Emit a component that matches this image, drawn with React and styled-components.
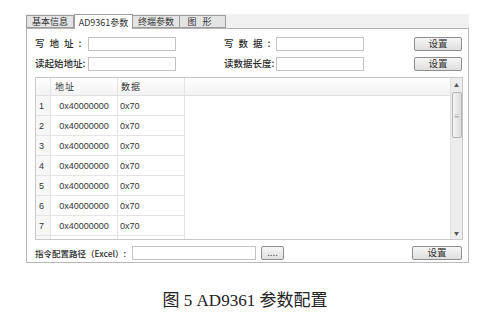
import React from 'react';
import styled, { createGlobalStyle } from 'styled-components';

const uiFont = '"Noto Sans CJK SC", "DejaVu Sans", sans-serif';

const GlobalStyle = createGlobalStyle`
  html, body {
    margin: 0;
    padding: 0;
    background: #ffffff;
  }
  body {
    font-family: ${uiFont};
    color: #222222;
  }
`;

const Page = styled.div`
  width: 489px;
  height: 318px;
  display: flex;
  flex-direction: column;
  overflow: hidden;
`;

const Window = styled.div`
  margin: 13px 0 0 26px;
  width: 443px;
  display: flex;
  flex-direction: column;
`;

const TabStrip = styled.div`
  display: flex;
  align-items: flex-end;
  height: 14px;
  background: #f0f0f0;
  border-bottom: 1px solid #b4b4b4;
  margin-top: 1px;
`;

const Tab = styled.div`
  box-sizing: border-box;
  width: ${p => p.w}px;
  height: ${p => (p.active ? 15 : 13)}px;
  margin-bottom: ${p => (p.active ? -1 : 0)}px;
  display: flex;
  align-items: center;
  justify-content: center;
  font-size: 9px;
  line-height: 1;
  letter-spacing: ${p => p.spacing || 0}px;
  background: ${p => (p.active ? '#ffffff' : '#e4e4e4')};
  border: 1px solid #9c9c9c;
  border-bottom: ${p => (p.active ? 'none' : '1px solid #9c9c9c')};
  border-left: ${p => (p.first || p.active ? '1px solid #9c9c9c' : 'none')};
  color: #333;
`;

const Panel = styled.div`
  box-sizing: border-box;
  height: 234px;
  background: #ffffff;
  border: 1px solid #b8b8b8;
  border-top: none;
  padding: 8px 6px 0 8px;
  display: flex;
  flex-direction: column;
`;

const FormRow = styled.div`
  display: flex;
  align-items: center;
  height: 14px;
  margin-bottom: 6px;
`;

const Label = styled.span`
  width: ${p => (p.w ? `${p.w}px` : 'auto')};
  flex: none;
  margin-left: ${p => p.ml || 0}px;
  font-size: ${p => p.size || 9.5}px;
  line-height: 1.2;
  font-weight: 500;
  letter-spacing: ${p => p.spacing || 0}px;
  white-space: nowrap;
  color: #2a2a2a;
`;

const Input = styled.div`
  box-sizing: border-box;
  flex: none;
  width: ${p => p.w}px;
  height: 14px;
  border: 1px solid #c4c4c4;
  background: #fff;
`;

const Button = styled.div`
  box-sizing: border-box;
  flex: none;
  width: ${p => p.w}px;
  height: 14px;
  margin-left: ${p => (p.ml === undefined ? 'auto' : `${p.ml}px`)};
  border: 1px solid #8e8e8e;
  border-radius: 2px;
  background: linear-gradient(#f6f6f6, #dedede);
  display: flex;
  align-items: center;
  justify-content: center;
  font-size: 9.5px;
  line-height: 1;
  color: #333;
`;

const Table = styled.div`
  box-sizing: border-box;
  position: relative;
  height: 163px;
  width: 428px;
  border: 1px solid #c8c8c8;
  overflow: hidden;
  color: #333;
`;

const Grid = styled.div`
  display: grid;
  grid-template-columns: 15px 67px 67px 1fr;
`;

const HeadCell = styled.div`
  height: 17px;
  display: flex;
  align-items: center;
  padding-left: ${p => p.pad || 0}px;
  background: linear-gradient(#ffffff, #f2f2f2);
  border-bottom: 1px solid #e0e0e0;
  border-right: ${p => (p.last ? 'none' : '1px solid #e4e4e4')};
  font-size: 9px;
  letter-spacing: 1px;
  color: #333;
`;

const Cell = styled.div`
  height: 19px;
  display: flex;
  align-items: center;
  justify-content: ${p => (p.center ? 'center' : 'flex-start')};
  padding-left: ${p => p.pad || 0}px;
  border-bottom: ${p => (p.blank ? 'none' : '1px solid #e4e4e4')};
  border-right: ${p => (p.blank ? 'none' : '1px solid #e4e4e4')};
  background: ${p => (p.num ? '#f7f7f7' : '#fff')};
  font-family: "Liberation Sans", sans-serif;
  font-size: 9px;
  color: #333;
`;

const ScrollBar = styled.div`
  position: absolute;
  top: 0;
  right: 0;
  bottom: 0;
  width: 11px;
  background: #ededed;
  border-left: 1px solid #e0e0e0;
  display: flex;
  flex-direction: column;
  align-items: center;
`;

const Arrow = styled.div`
  height: 13px;
  display: flex;
  align-items: center;
  justify-content: center;
  font-size: 5px;
  color: #555;
`;

const Thumb = styled.div`
  box-sizing: border-box;
  width: 10px;
  height: 46px;
  margin-top: 1px;
  border: 1px solid #b4b4b4;
  border-radius: 2px;
  background: linear-gradient(90deg, #f4f4f4, #dcdcdc);
  display: flex;
  align-items: center;
  justify-content: center;
  font-size: 6px;
  color: #888;
`;

const Spacer = styled.div`
  flex: 1;
`;

const BottomRow = styled.div`
  display: flex;
  align-items: center;
  height: 14px;
  margin-top: 6px;
`;

const PathInput = styled(Input)`
  margin-left: auto;
`;

const PathGroup = styled.div`
  display: flex;
  align-items: center;
  width: 249px;
  flex: none;
`;

const Caption = styled.div`
  margin-top: 23px;
  text-align: center;
  font-family: "Liberation Serif", "Noto Sans CJK SC", serif;
  font-size: 17px;
  color: #222;
  padding-left: 1px;
`;

const rows = [1, 2, 3, 4, 5, 6, 7];

export default function App() {
  return (
    <Page>
      <GlobalStyle />
      <Window>
        <TabStrip>
          <Tab w={48} first>基本信息</Tab>
          <Tab w={59} active>AD9361参数</Tab>
          <Tab w={47}>终端参数</Tab>
          <Tab w={46} spacing={6}>图形</Tab>
        </TabStrip>
        <Panel>
          <FormRow>
            <Label w={53} spacing={5}>写地址:</Label>
            <Input w={88} />
            <Label w={52} ml={48} spacing={5}>写数据:</Label>
            <Input w={88} />
            <Button w={48}>设置</Button>
          </FormRow>
          <FormRow>
            <Label w={53}>读起始地址:</Label>
            <Input w={88} />
            <Label w={52} ml={48}>读数据长度:</Label>
            <Input w={88} />
            <Button w={48}>设置</Button>
          </FormRow>
          <Table>
            <Grid>
              <HeadCell />
              <HeadCell pad={4}>地址</HeadCell>
              <HeadCell pad={3}>数据</HeadCell>
              <HeadCell last />
              {rows.map(n => (
                <React.Fragment key={n}>
                  <Cell num pad={3}>{n}</Cell>
                  <Cell center>0x40000000</Cell>
                  <Cell pad={2}>0x70</Cell>
                  <Cell blank />
                </React.Fragment>
              ))}
              {/* partly scrolled-in eighth row, only its grid lines show */}
              <Cell num />
              <Cell />
              <Cell />
              <Cell blank />
            </Grid>
            <ScrollBar>
              <Arrow>▲</Arrow>
              <Thumb>≡</Thumb>
              <Spacer />
              <Arrow>▼</Arrow>
            </ScrollBar>
          </Table>
          <BottomRow>
            <PathGroup>
              <Label size={8.5}>指令配置路径（Excel）:</Label>
              <PathInput w={124} />
              <Button w={23} ml={5}>....</Button>
            </PathGroup>
            <Button w={50}>设置</Button>
          </BottomRow>
        </Panel>
      </Window>
      <Caption>图 5 AD9361 参数配置</Caption>
    </Page>
  );
}
